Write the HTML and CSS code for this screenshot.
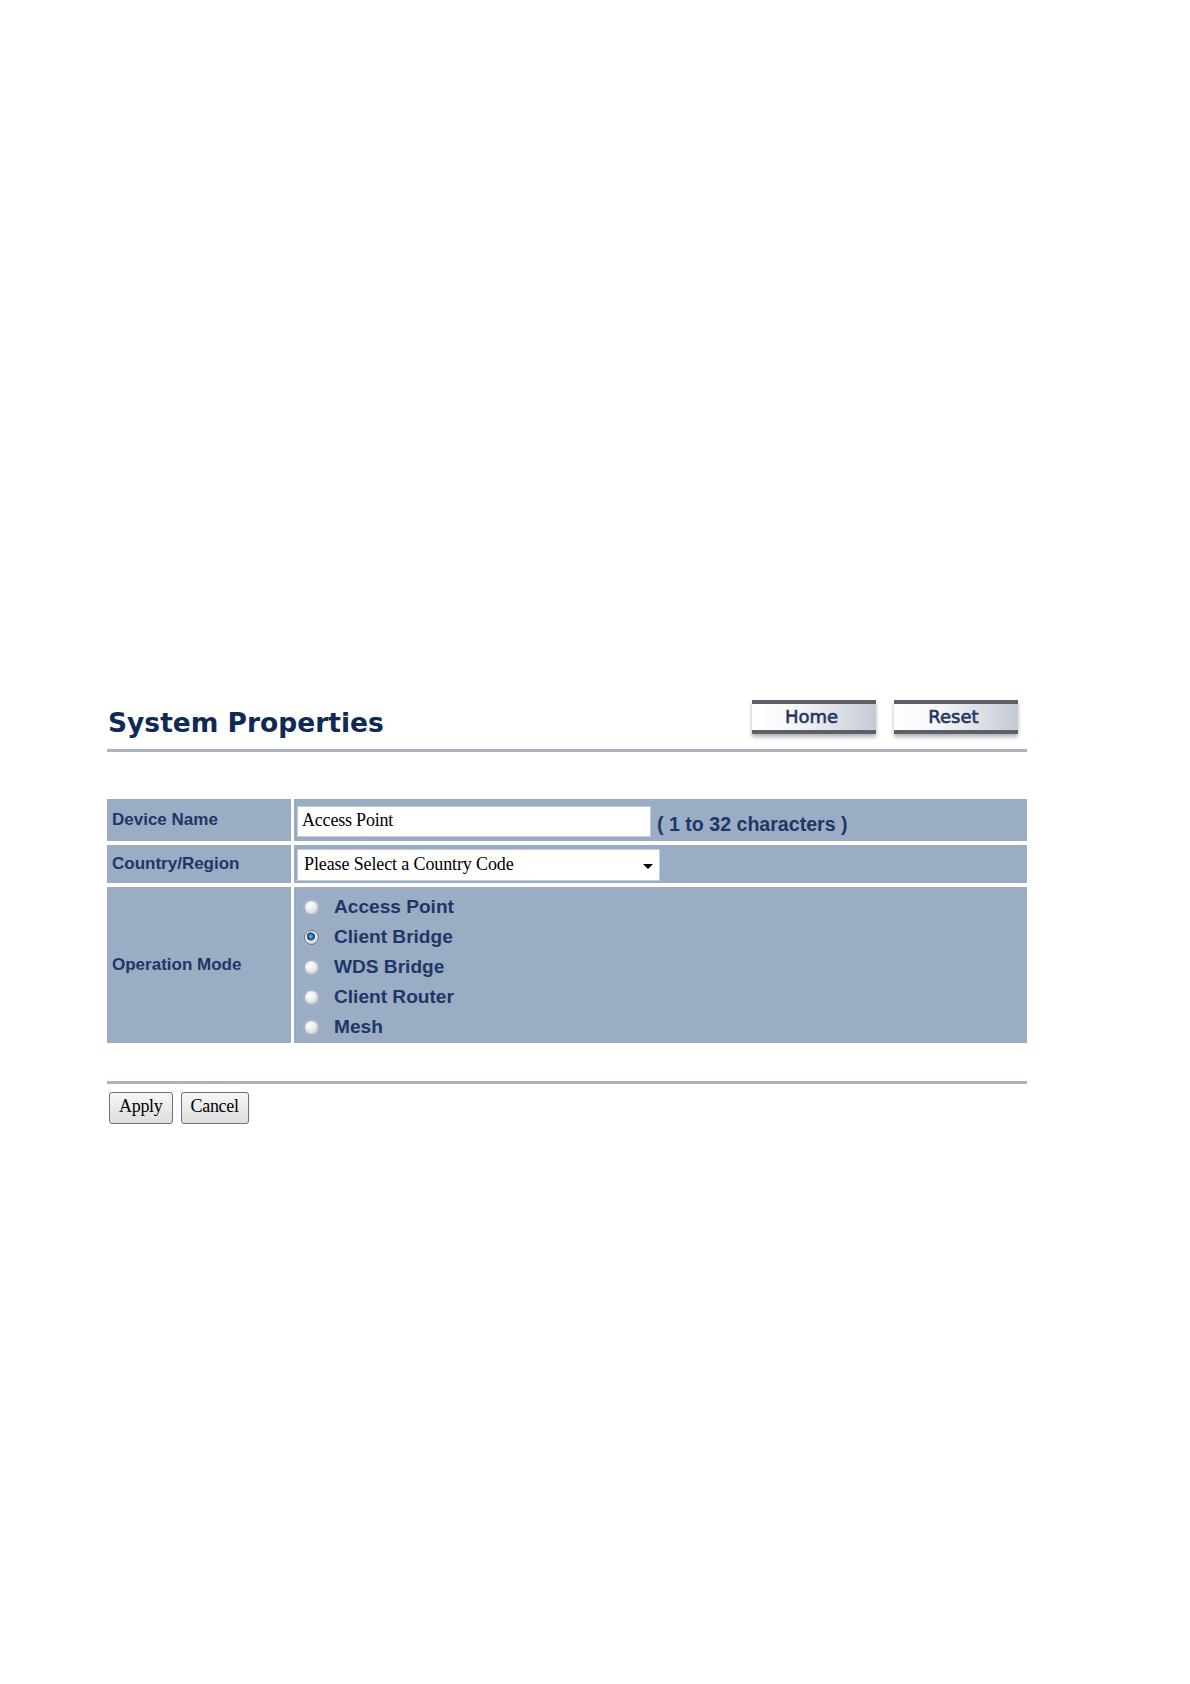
FILE: index.html
```html
<!DOCTYPE html>
<html lang="en">
<head>
<meta charset="utf-8">
<title>System Properties</title>
<link rel="stylesheet" href="styles.css">
</head>
<body>
<div class="page">
  <div class="header">
    <h1 class="title">System Properties</h1>
    <div class="nav-buttons">
      <button class="nav-btn" type="button">Home</button>
      <button class="nav-btn" type="button">Reset</button>
    </div>
  </div>
  <div class="rule"></div>

  <div class="form-grid">
    <div class="label">Device Name</div>
    <div class="field field-name">
      <input class="text-input" type="text" value="Access Point">
      <span class="hint">( 1 to 32 characters )</span>
    </div>

    <div class="label">Country/Region</div>
    <div class="field field-country">
      <div class="select-wrap">
        <select class="select">
          <option>Please Select a Country Code</option>
        </select>
      </div>
    </div>

    <div class="label">Operation Mode</div>
    <div class="field field-mode">
      <label class="mode-option"><input class="radio" type="radio" name="mode">Access Point</label>
      <label class="mode-option"><input class="radio" type="radio" name="mode" checked>Client Bridge</label>
      <label class="mode-option"><input class="radio" type="radio" name="mode">WDS Bridge</label>
      <label class="mode-option"><input class="radio" type="radio" name="mode">Client Router</label>
      <label class="mode-option"><input class="radio" type="radio" name="mode">Mesh</label>
    </div>
  </div>

  <div class="rule rule-bottom"></div>
  <div class="actions">
    <button class="action-btn" type="button">Apply</button>
    <button class="action-btn" type="button">Cancel</button>
  </div>
</div>
</body>
</html>
```

FILE: styles.css
```css
html, body {
  margin: 0;
  background: #ffffff;
}

.page {
  width: 920px;
  margin-left: 107px;
  padding-top: 700px;
}

.header {
  display: flex;
  justify-content: space-between;
  align-items: flex-start;
  height: 35px;
}

.title {
  margin: 7px 0 0 1px;
  font: bold 26.5px/32px "DejaVu Sans", Verdana, sans-serif;
  color: #102a55;
}

.nav-buttons {
  display: flex;
  gap: 18px;
  margin-right: 9px;
}

.nav-btn {
  box-sizing: border-box;
  width: 124px;
  height: 34px;
  padding: 0 5px 0 0;
  border: 0;
  border-top: 4px solid #5c6068;
  border-bottom: 4px solid #5c6068;
  background: linear-gradient(to right, #ffffff 0%, #f6f7f9 35%, #c4cad5 100%);
  box-shadow: 0 3px 4px rgba(0, 0, 0, 0.3);
  font: 18px/26px "DejaVu Sans", sans-serif;
  -webkit-text-stroke: 0.6px #1f3662;
  color: #1f3662;
}

.rule {
  height: 3px;
  margin-top: 14px;
  background: #a9b3c4;
}

.form-grid {
  margin-top: 47px;
  display: grid;
  grid-template-columns: 184px 1fr;
  grid-template-rows: 42px 38px 156px;
  gap: 4px 3px;
}

.label {
  display: flex;
  align-items: center;
  padding-left: 5px;
  background: #9badc5;
  font: bold 17px "Liberation Sans", Arial, sans-serif;
  color: #1d3767;
}

.field {
  display: flex;
  align-items: center;
  padding-left: 3px;
  background: #9badc5;
}

.field-name {
  padding-top: 3px;
}

.text-input {
  box-sizing: border-box;
  width: 354px;
  height: 31px;
  margin: 0;
  padding: 0 4px 3px;
  border: 1px solid #c5ccd6;
  background: #ffffff;
  font: 18px "Liberation Serif", serif;
  letter-spacing: -0.2px;
  color: #000000;
  outline: none;
}

.hint {
  margin: 6px 0 0 6px;
  font: bold 19.6px "Liberation Sans", Arial, sans-serif;
  color: #1d3767;
}

.field-country {
  padding-top: 2px;
}

.select-wrap {
  position: relative;
}

.select-wrap::after {
  content: "";
  position: absolute;
  right: 7px;
  top: 15px;
  border-left: 5px solid transparent;
  border-right: 5px solid transparent;
  border-top: 5px solid #000000;
  pointer-events: none;
}

.select {
  -webkit-appearance: none;
  appearance: none;
  box-sizing: border-box;
  display: block;
  width: 363px;
  height: 32px;
  margin: 0;
  padding: 0 0 3px 6px;
  border: 1px solid #c5ccd6;
  border-radius: 0;
  background: #ffffff;
  font: 18px "Liberation Serif", serif;
  letter-spacing: -0.12px;
  color: #000000;
}

.field-mode {
  flex-direction: column;
  align-items: flex-start;
  justify-content: flex-start;
  padding: 5px 0 0 0;
}

.mode-option {
  display: flex;
  align-items: center;
  height: 30px;
  font: bold 19.1px "Liberation Sans", Arial, sans-serif;
  color: #1d3767;
}

.radio {
  -webkit-appearance: none;
  appearance: none;
  box-sizing: border-box;
  width: 15px;
  height: 15px;
  margin: 0 15px 0 10px;
  border: 1px solid #a9aeb6;
  border-radius: 50%;
  background: radial-gradient(circle at 40% 35%, #ffffff 0%, #eceef1 40%, #b9bdc4 100%);
  box-shadow: 0 0 1px rgba(255, 255, 255, 0.6);
}

.radio:checked {
  border-color: #66707e;
  background:
    radial-gradient(circle at 45% 42%, #8cc8e4 0, #2e7fae 1.8px, #0f4a72 3.8px, transparent 4.4px),
    radial-gradient(circle at 40% 35%, #ffffff 0%, #e8eaee 45%, #b5bac2 100%);
}

.rule-bottom {
  margin-top: 38px;
}

.actions {
  display: flex;
  gap: 8px;
  margin: 8px 0 0 2px;
}

.action-btn {
  height: 32px;
  margin: 0;
  padding: 0 9px 4px;
  border: 1px solid #707070;
  border-radius: 3px;
  background: linear-gradient(#f7f7f7, #dddddd);
  font: 18px "Liberation Serif", serif;
  letter-spacing: -0.3px;
  color: #000000;
}
```
